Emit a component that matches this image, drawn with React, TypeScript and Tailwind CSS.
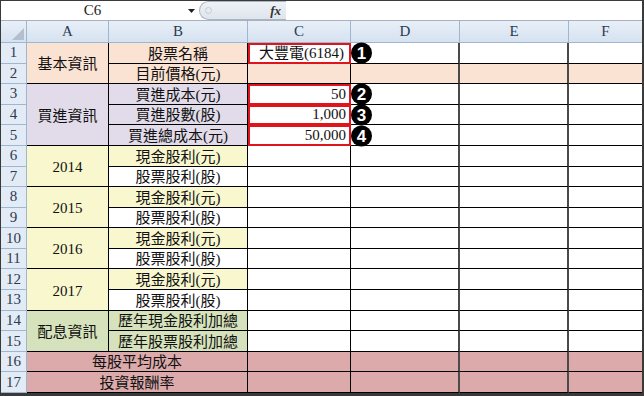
import { ReactNode } from 'react';

const serif = "font-['Liberation_Serif','Noto_Sans_CJK_TC',serif]";

const peach = 'bg-[#fbe3d4]';
const lavender = 'bg-[#e2dcea]';
const yellow = 'bg-[#f8f7ce]';
const green = 'bg-[#d5e2bb]';
const pink = 'bg-[#dcaaab]';

interface CellSpec {
  t?: string;
  bg?: string;
  span?: string;
  red?: boolean;
  align?: 'center' | 'right';
  badge?: string;
}

interface RowSpec {
  a?: CellSpec;
  b?: CellSpec;
  c: CellSpec;
  rest: string;
}

const rows: RowSpec[] = [
  { a: { t: '基本資訊', bg: peach, span: 'row-span-2' }, b: { t: '股票名稱', bg: peach }, c: { t: '大豐電(6184)', red: true, align: 'center', badge: '1' }, rest: 'bg-white' },
  { b: { t: '目前價格(元)', bg: peach }, c: { bg: peach }, rest: peach },
  { a: { t: '買進資訊', bg: lavender, span: 'row-span-3' }, b: { t: '買進成本(元)', bg: lavender }, c: { t: '50', red: true, badge: '2' }, rest: 'bg-white' },
  { b: { t: '買進股數(股)', bg: lavender }, c: { t: '1,000', red: true, badge: '3' }, rest: 'bg-white' },
  { b: { t: '買進總成本(元)', bg: lavender }, c: { t: '50,000', red: true, badge: '4' }, rest: 'bg-white' },
  { a: { t: '2014', bg: yellow, span: 'row-span-2' }, b: { t: '現金股利(元)', bg: yellow }, c: {}, rest: 'bg-white' },
  { b: { t: '股票股利(股)', bg: 'bg-white' }, c: {}, rest: 'bg-white' },
  { a: { t: '2015', bg: yellow, span: 'row-span-2' }, b: { t: '現金股利(元)', bg: yellow }, c: {}, rest: 'bg-white' },
  { b: { t: '股票股利(股)', bg: 'bg-white' }, c: {}, rest: 'bg-white' },
  { a: { t: '2016', bg: yellow, span: 'row-span-2' }, b: { t: '現金股利(元)', bg: yellow }, c: {}, rest: 'bg-white' },
  { b: { t: '股票股利(股)', bg: 'bg-white' }, c: {}, rest: 'bg-white' },
  { a: { t: '2017', bg: yellow, span: 'row-span-2' }, b: { t: '現金股利(元)', bg: yellow }, c: {}, rest: 'bg-white' },
  { b: { t: '股票股利(股)', bg: 'bg-white' }, c: {}, rest: 'bg-white' },
  { a: { t: '配息資訊', bg: green, span: 'row-span-2' }, b: { t: '歷年現金股利加總', bg: green }, c: {}, rest: 'bg-white' },
  { b: { t: '歷年股票股利加總', bg: green }, c: {}, rest: 'bg-white' },
  { b: { t: '每股平均成本', bg: pink, span: 'col-span-2' }, c: { bg: pink }, rest: pink },
  { b: { t: '投資報酬率', bg: pink, span: 'col-span-2' }, c: { bg: pink }, rest: pink },
];

function Badge({ n }: { n: string }) {
  return (
    <div className="absolute left-[calc(100%+2px)] top-1/2 -translate-y-1/2 z-10 w-[21px] h-[21px] rounded-full bg-black text-white flex items-center justify-center font-['Liberation_Sans',sans-serif] font-bold text-[17px] leading-none">
      {n}
    </div>
  );
}

function HeaderCell({ children, className = '' }: { children?: ReactNode; className?: string }) {
  return (
    <div className={`flex items-center justify-center border-b border-r border-[#9eb6ce] bg-gradient-to-b from-[#e8eff8] to-[#d6e2f0] text-[#2b3b50] text-[15px] leading-none ${className}`}>
      {children}
    </div>
  );
}

export default function App() {
  return (
    <div className={`w-[644px] h-[396px] overflow-hidden bg-white border-[#3a3a3a] border-t border-l border-r-2 border-b-[3px] ${serif}`}>
      {/* formula bar */}
      <div className="flex h-[19px] items-stretch">
        <div className="w-[183px] flex items-center justify-center text-[15px] text-[#222] leading-none">C6</div>
        <div className="w-[15px] flex items-center justify-center">
          <svg width="7" height="4" viewBox="0 0 7 4"><path d="M0 0h7L3.5 4z" fill="#222" /></svg>
        </div>
        <div className="w-[87px] relative rounded-l-full border border-r-0 border-[#aab4c2] bg-gradient-to-b from-[#eef2f7] to-[#dfe5ed] flex items-center">
          <div className="ml-[5px] w-[7px] h-[7px] rounded-full border border-[#c4cbd5]" />
          <span className="ml-auto mr-[5px] italic font-bold text-[13px] text-[#333] leading-none">fx</span>
        </div>
        <div className="flex-1 bg-white" />
      </div>
      <div className="h-px bg-[#a8b2bf]" />

      {/* sheet */}
      <div className="grid grid-cols-[26px_82px_139px_103px_109px_109px_73px] grid-rows-[22px_repeat(17,minmax(0,1fr))] h-[372px]">
        <HeaderCell className="relative">
          <svg className="absolute right-[2px] bottom-[2px]" width="12" height="12" viewBox="0 0 12 12"><path d="M12 0V12H0z" fill="#b3bfcd" /></svg>
        </HeaderCell>
        <HeaderCell>A</HeaderCell>
        <HeaderCell>B</HeaderCell>
        <HeaderCell>C</HeaderCell>
        <HeaderCell>D</HeaderCell>
        <HeaderCell>E</HeaderCell>
        <HeaderCell className="border-r-0">F</HeaderCell>

        {rows.map((r, i) => (
          <div key={i} className="contents">
            <HeaderCell className="bg-none bg-[#e3ebf6]">{i + 1}</HeaderCell>
            {r.a && (
              <div className={`${r.a.span} ${r.a.bg} flex items-center justify-center border-b border-r border-black text-[15px] text-[#111] leading-none pt-[3px]`}>
                {r.a.t}
              </div>
            )}
            {r.b && (
              <div className={`${r.b.span ?? ''} ${r.b.bg} flex items-end justify-center border-b border-r border-black text-[15px] text-[#111] leading-none pb-[1px]`}>
                {r.b.t}
              </div>
            )}
            <div
              className={`relative flex items-end text-[15px] text-[#111] leading-none ${r.c.bg ?? 'bg-white'} ${
                r.c.red ? 'border-2 border-[#e0141b] pb-[1px]' : 'border-b border-r border-black pb-[2px]'
              } ${r.c.align === 'center' ? 'justify-center pl-[4px]' : 'justify-end pr-[3px]'}`}
            >
              {r.c.t}
              {r.c.badge && <Badge n={r.c.badge} />}
            </div>
            <div className={`${r.rest} border-b border-r-2 border-b-black border-r-[#4a4a4a]`} />
            <div className={`${r.rest} border-b border-r-2 border-b-black border-r-[#4a4a4a]`} />
            <div className={`${r.rest} border-b border-b-black`} />
          </div>
        ))}
      </div>
    </div>
  );
}
